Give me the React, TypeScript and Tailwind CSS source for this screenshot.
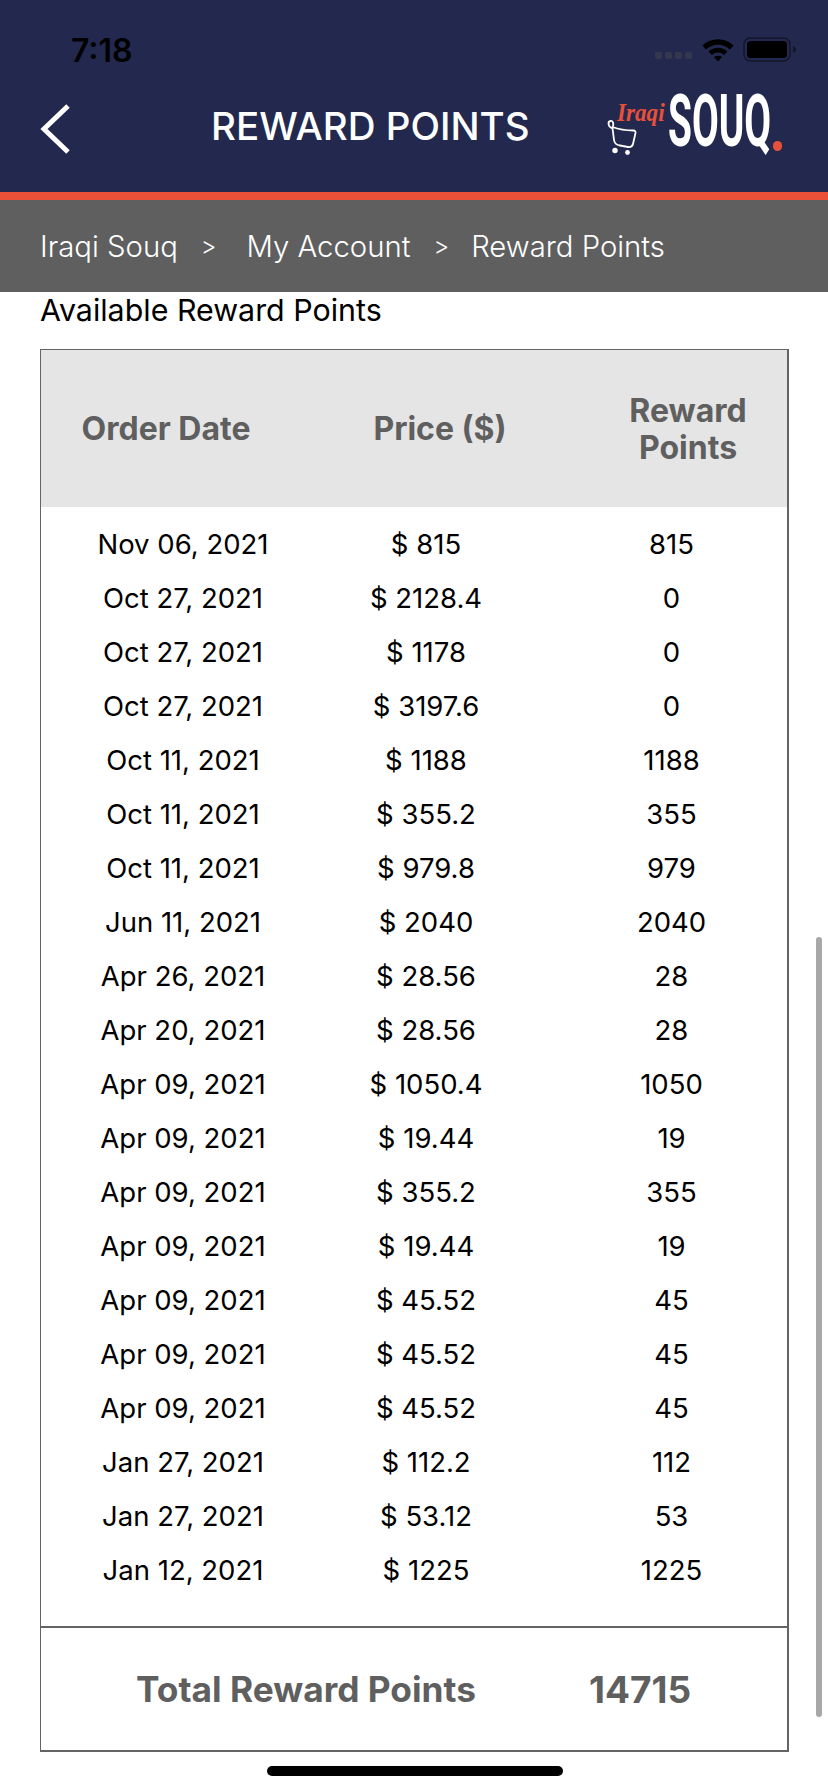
import React from 'react';

const rows = [
  ['Nov 06, 2021', '$ 815', '815'],
  ['Oct 27, 2021', '$ 2128.4', '0'],
  ['Oct 27, 2021', '$ 1178', '0'],
  ['Oct 27, 2021', '$ 3197.6', '0'],
  ['Oct 11, 2021', '$ 1188', '1188'],
  ['Oct 11, 2021', '$ 355.2', '355'],
  ['Oct 11, 2021', '$ 979.8', '979'],
  ['Jun 11, 2021', '$ 2040', '2040'],
  ['Apr 26, 2021', '$ 28.56', '28'],
  ['Apr 20, 2021', '$ 28.56', '28'],
  ['Apr 09, 2021', '$ 1050.4', '1050'],
  ['Apr 09, 2021', '$ 19.44', '19'],
  ['Apr 09, 2021', '$ 355.2', '355'],
  ['Apr 09, 2021', '$ 19.44', '19'],
  ['Apr 09, 2021', '$ 45.52', '45'],
  ['Apr 09, 2021', '$ 45.52', '45'],
  ['Apr 09, 2021', '$ 45.52', '45'],
  ['Jan 27, 2021', '$ 112.2', '112'],
  ['Jan 27, 2021', '$ 53.12', '53'],
  ['Jan 12, 2021', '$ 1225', '1225'],
];

const StatusIcons = () => (
  <div className="flex items-center mt-[4px]">
    <div className="flex gap-[3px] mt-[11px] mr-[10px]">
      {[0, 1, 2, 3].map((i) => (
        <span key={i} className="w-[7px] h-[7px] rounded-[2px] bg-[#34384f]" />
      ))}
    </div>
    <svg width="32" height="24" viewBox="0 0 32 24" className="mr-[9px]">
      <path d="M0.5 7.5 C9 -1 23 -1 31.5 7.5 L28 11.5 C21 5 11 5 4 11.5 Z" fill="#000" />
      <path d="M6.5 13.5 C12 8.5 20 8.5 25.5 13.5 L22 17 C18 13.8 14 13.8 10 17 Z" fill="#000" />
      <path d="M12 19 C14.5 17.2 17.5 17.2 20 19 L16 23.5 Z" fill="#000" />
    </svg>
    <svg width="54" height="26" viewBox="0 0 54 26">
      <rect x="1" y="1" width="46" height="23" rx="6.5" fill="none" stroke="#14172a" strokeWidth="1.5" />
      <rect x="4" y="4" width="40" height="17" rx="3.5" fill="#000" />
      <path d="M50 9 C52 9.5 53 11 53 12.5 C53 14 52 15.5 50 16 Z" fill="#14172a" />
    </svg>
  </div>
);

const Logo = () => (
  <div className="relative w-[180px] h-[64px]">
    <svg width="32" height="38" viewBox="0 0 32 38" className="absolute left-0 top-[25px]">
      <path
        d="M5.5 10 C2 8.5 1.5 3.5 4.5 3 C7.5 2.5 8 6.5 6.5 10 L8 22 C8.5 26 11 27 14 27.5 L22 29 C25 29.5 26.5 28 27 26 L29.5 15 C29.8 13.5 29 12.5 27.5 12.5 C20 12.5 13 11.5 6.5 9"
        fill="none"
        stroke="#fff"
        strokeWidth="1.8"
        strokeLinecap="round"
        strokeLinejoin="round"
      />
      <circle cx="9" cy="32.5" r="2.7" fill="#fff" />
      <circle cx="21.5" cy="34.5" r="2.4" fill="#fff" />
    </svg>
    <span className="absolute left-[11px] top-[5px] origin-left scale-x-[0.89] font-['Liberation_Serif',serif] italic font-bold text-[26px] leading-[30px] text-[#e8503a]">
      Iraqi
    </span>
    <span className="absolute left-[62px] top-[-11px] origin-left scale-x-[0.54] font-['Roboto',sans-serif] font-bold text-[72px] leading-[80px] text-white">
      SOUQ
    </span>
    <span className="absolute left-[167px] top-[48px] w-[9px] h-[10px] rounded-full bg-[#e8503a]" />
  </div>
);

export default function App() {
  return (
    <div className="relative w-[828px] h-[1792px] overflow-hidden bg-white font-['Inter',sans-serif]">
      <div className="h-[192px] bg-[#23294e] flex flex-col">
        <div className="h-[93px] pt-[33px] pl-[71px] pr-[31px] flex justify-between items-start">
          <span className="font-semibold text-[32px] leading-[36px] text-black">7:18</span>
          <StatusIcons />
        </div>
        <div className="flex-1 relative flex items-start pl-[40px] pr-[42px]">
          <svg width="32" height="52" viewBox="0 0 32 52" className="mt-[10px]">
            <path d="M28 3 L4 26 L28 49" fill="none" stroke="#fff" strokeWidth="5" />
          </svg>
          <h1 className="absolute left-[211px] top-[10px] text-[38.5px] leading-[46px] font-medium text-white">REWARD POINTS</h1>
          <div className="ml-auto">
            <Logo />
          </div>
        </div>
      </div>
      <div className="h-[8px] bg-[#ea4f37]" />
      <div className="h-[92px] pt-[2px] bg-[#5f5f5f] flex items-center pl-[40px] text-[29.3px] text-white font-light">
        <span>Iraqi Souq</span>
        <span className="ml-[23px] text-[24px]">&gt;</span>
        <span className="ml-[30px]">My Account</span>
        <span className="ml-[23px] text-[24px]">&gt;</span>
        <span className="ml-[22px]">Reward Points</span>
      </div>

      <div className="pl-[40px] pr-[39px]">
        <p className="text-[30.4px] leading-[36px] text-black">Available Reward Points</p>
        <div className="mt-[21px] w-[749px] h-[1403px] border-2 border-[#646464] border-t border-l flex flex-col">
          <div className="h-[157px] bg-[#e5e5e5] grid grid-cols-[250px_298px_198px] items-center text-center text-[#5f5f5f] font-bold text-[32px] leading-[37px]">
            <span>Order Date</span>
            <span>Price ($)</span>
            <span>
              Reward
              <br />
              Points
            </span>
          </div>
          <div className="flex-1 pt-[11px]">
            {rows.map(([date, price, points], i) => (
              <div
                key={i}
                className="h-[54px] grid grid-cols-[284px_202px_260px] items-center text-center text-[27.5px] text-black"
              >
                <span>{date}</span>
                <span>{price}</span>
                <span className="pl-[29px]">{points}</span>
              </div>
            ))}
          </div>
          <div className="h-[124px] pt-[2px] border-t-2 border-[#646464] grid grid-cols-[530px_138px] items-center text-center font-bold text-[35.3px] text-[#5f5f5f]">
            <span>Total Reward Points</span>
            <span className="text-[37px]">14715</span>
          </div>
        </div>
      </div>

      <div className="absolute left-[816px] top-[937px] w-[6px] h-[780px] rounded-full bg-[#a8a8a8]" />
      <div className="absolute left-[267px] top-[1766px] w-[296px] h-[10px] rounded-full bg-black" />
    </div>
  );
}
